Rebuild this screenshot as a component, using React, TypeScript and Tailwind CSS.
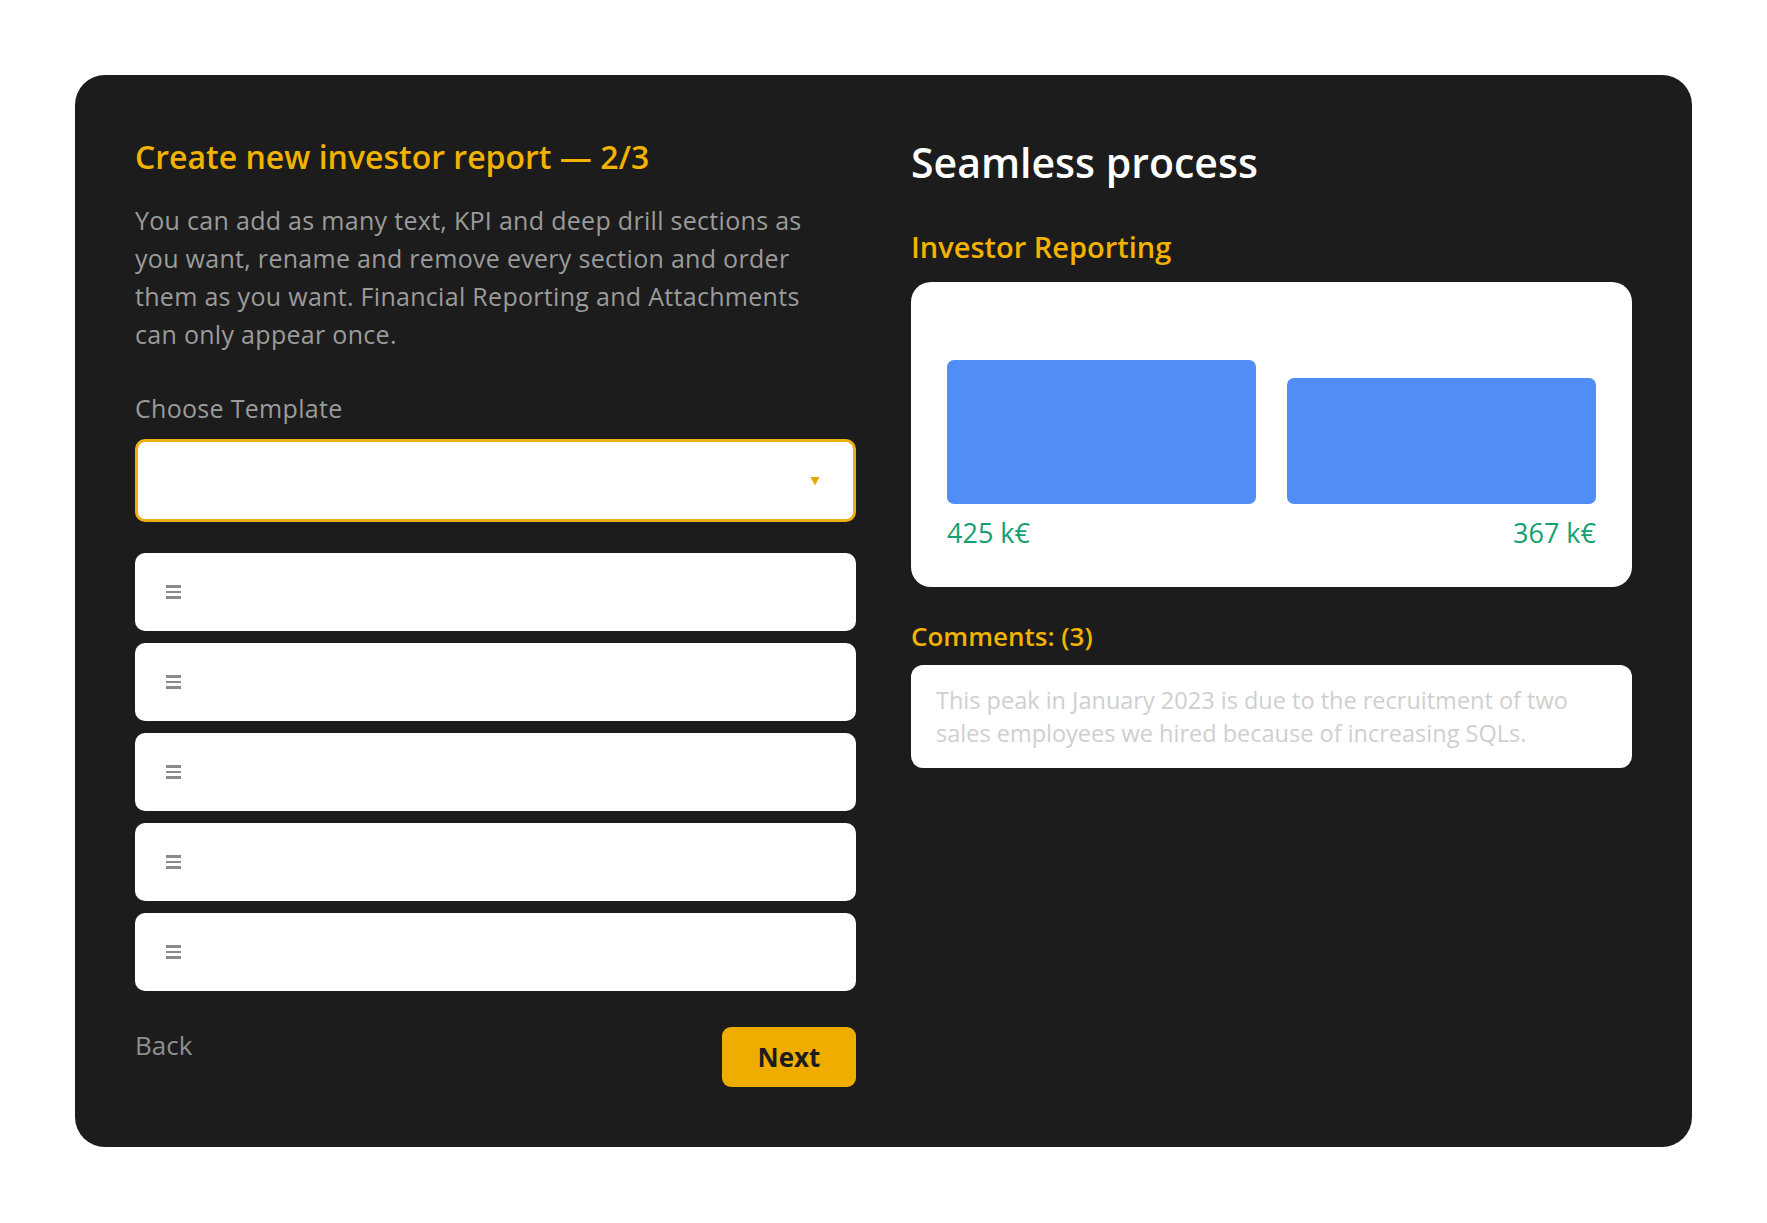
import React from "react";

const font = { fontFamily: "'Open Sans', 'Noto Sans', sans-serif" };

function DragHandle() {
  return (
    <div className="flex w-[15px] flex-col gap-[3px]">
      <div className="h-[2.5px] bg-[#8a8a8a]" />
      <div className="h-[2.5px] bg-[#8a8a8a]" />
      <div className="h-[2.5px] bg-[#8a8a8a]" />
    </div>
  );
}

function SectionRow() {
  return (
    <div className="flex h-[78px] items-center rounded-[10px] bg-white pl-[31px]">
      <DragHandle />
    </div>
  );
}

export default function App() {
  return (
    <div className="min-h-screen bg-white p-[75px]" style={font}>
      <div className="grid h-[1072px] grid-cols-2 gap-x-[55px] rounded-[30px] bg-[#1c1c1c] p-[60px]">
        {/* Left: report wizard */}
        <div className="flex flex-col">
          <h1 className="mt-[2px] text-[32px] font-semibold leading-[40px] text-[#f2b200]">
            Create new investor report — 2/3
          </h1>
          <p className="mt-[24px] max-w-[700px] text-[25px] leading-[38px] tracking-[0.3px] text-[#9b9b9b]">
            You can add as many text, KPI and deep drill sections as you want, rename and remove every
            section and order them as you want. Financial Reporting and Attachments can only appear once.
          </p>
          <div className="mt-[37px] text-[25px] leading-[36px] tracking-[0.3px] text-[#9b9b9b]">Choose Template</div>
          <div className="mt-[13px] flex h-[83px] items-center justify-end rounded-[10px] border-[3px] border-[#edaf14] bg-white pr-[33px]">
            <svg width="10" height="10" viewBox="0 0 10 10">
              <path d="M0.5 1 L9.5 1 L5 9.5 Z" fill="#e6a600" />
            </svg>
          </div>
          <div className="mt-[31px] flex flex-col gap-[12px]">
            <SectionRow />
            <SectionRow />
            <SectionRow />
            <SectionRow />
            <SectionRow />
          </div>
          <div className="mt-[36px] flex items-start justify-between">
            <span className="text-[26px] leading-[36px] text-[#8f8f8f]">Back</span>
            <button className="flex h-[60px] w-[134px] items-center justify-center rounded-[9px] bg-[#efad00] text-[26px] font-bold text-[#1c1c1c]">
              Next
            </button>
          </div>
        </div>

        {/* Right: preview */}
        <div className="flex flex-col">
          <h2 className="text-[41px] font-semibold leading-[54px] text-white">Seamless process</h2>
          <h3 className="mt-[40px] text-[29px] font-semibold leading-[36px] text-[#f2b200]">Investor Reporting</h3>
          <div className="mt-[17px] flex h-[305px] flex-col rounded-[20px] bg-white px-[36px] pt-[36px]">
            <div className="flex h-[186px] items-end gap-[31px]">
              <div className="h-[144px] flex-1 rounded-[7px] bg-[#508ef5]" />
              <div className="h-[126px] flex-1 rounded-[7px] bg-[#508ef5]" />
            </div>
            <div className="mt-[13px] flex justify-between text-[27px] leading-[32px] text-[#16a06f]">
              <span>425 k€</span>
              <span>367 k€</span>
            </div>
          </div>
          <h3 className="mt-[32px] text-[26px] font-semibold leading-[34px] text-[#f2b200]">Comments: (3)</h3>
          <div className="mt-[12px] flex h-[103px] items-center rounded-[12px] bg-white px-[25px]">
            <p className="text-[23.5px] leading-[33px] text-[#cfcfcf]">
              This peak in January 2023 is due to the recruitment of two sales employees we hired because of
              increasing SQLs.
            </p>
          </div>
        </div>
      </div>
    </div>
  );
}
